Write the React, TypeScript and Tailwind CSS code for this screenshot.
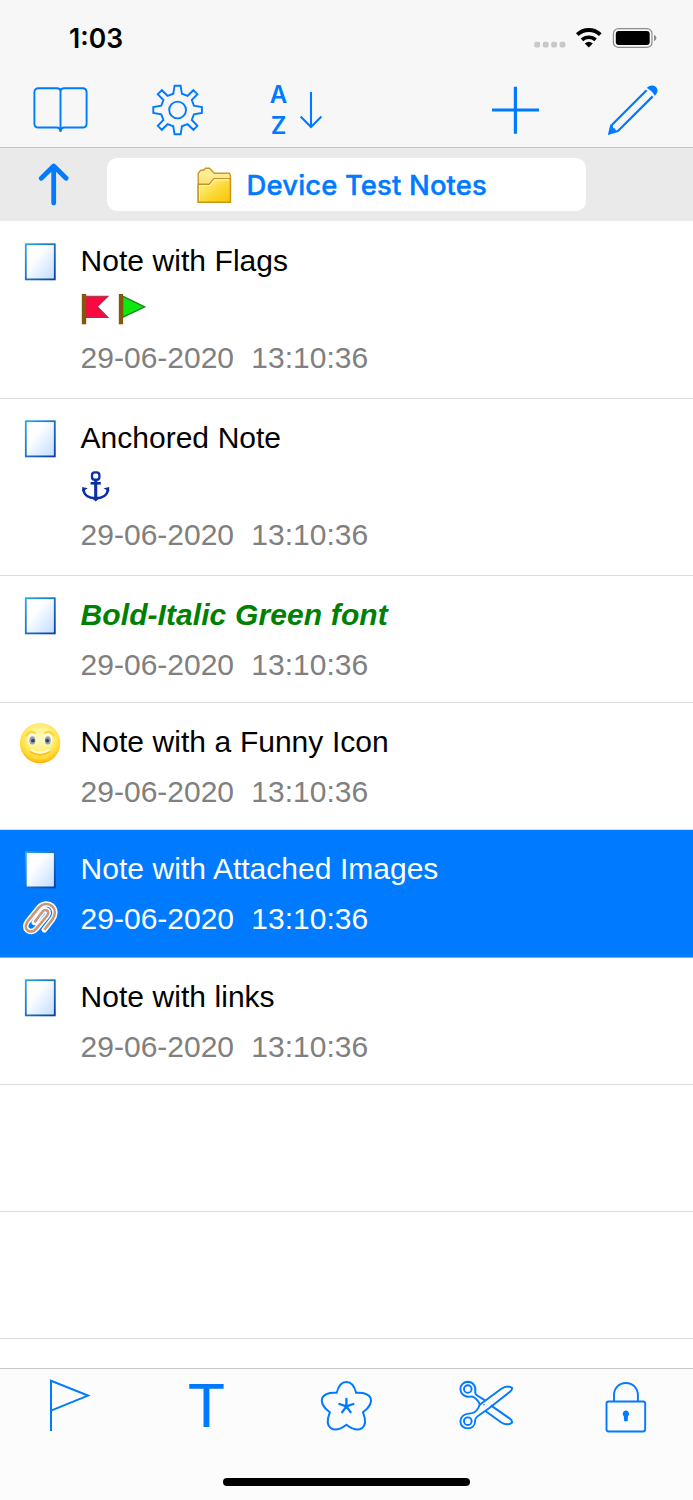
import type { ReactNode } from 'react';

type NoteIcon = 'page' | 'smiley';

interface Note {
  id: number;
  title: string;
  date: string;
  time: string;
  icon: NoteIcon;
  titleClass?: string;
  marks?: ReactNode;
  attachment?: boolean;
  selected?: boolean;
}

// one quarter of the gear outline, rotated four times
const GEAR_QUARTER = [
  [-4.3, -16.3],
  [-3, -24.3],
  [3, -24.3],
  [4.3, -16.3],
  [10, -14.2],
  [15.8, -19.8],
  [19.8, -15.8],
  [14.2, -10],
];

const GEAR_POINTS = [0, 1, 2, 3]
  .flatMap(turn =>
    GEAR_QUARTER.map(([x, y]) => {
      let p = [x, y];
      for (let i = 0; i < turn; i++) p = [-p[1], p[0]];
      return p.join(',');
    })
  )
  .join(' ');

function StatusBar() {
  return (
    <div className="h-[76px] flex pl-[69px] pr-[36px]">
      <span className="mt-[22px] font-['Inter'] font-semibold text-[26.5px] leading-[32px]">1:03</span>
      <svg className="ml-auto mt-[24px]" width="124" height="28" viewBox="0 0 124 28" fill="none">
        <g fill="#c8c8c8">
          <rect x="1.3" y="17.8" width="5.8" height="5.8" rx="1.8" />
          <rect x="9.8" y="17.8" width="5.8" height="5.8" rx="1.8" />
          <rect x="18.2" y="17.8" width="5.8" height="5.8" rx="1.8" />
          <rect x="26.6" y="17.8" width="5.8" height="5.8" rx="1.8" />
        </g>
        <path d="M44.3 10.6A16.6 16.6 0 0 1 67.3 10.6" stroke="#000" strokeWidth="3.9" />
        <path d="M49 15.9A10 10 0 0 1 62.6 15.9" stroke="#000" strokeWidth="3.6" />
        <path d="M55.8 23.6 51.8 19.5Q55.8 16 59.8 19.5Z" fill="#000" />
        <rect x="80.4" y="4.6" width="38.6" height="18.8" rx="5" stroke="#8c8c8c" strokeWidth="1.2" />
        <rect x="82.8" y="7" width="33.9" height="14" rx="3" fill="#000" />
        <path d="M121 10.8Q123.5 12 123.5 14T121 17.2Z" fill="#8c8c8c" />
      </svg>
    </div>
  );
}

function TopToolbar() {
  return (
    <div className="h-[71px] flex pt-[6px] pl-[30px] pr-[33px] text-[#007aff]">
      {/* Notebook */}
      <svg width="60" height="56" viewBox="0 0 60 56" fill="none" stroke="currentColor" strokeWidth="1.9">
        <path d="M30.5 8.8Q30 6.3 27 6.3H8.5Q4.4 6.3 4.4 10.4V41.4Q4.4 45.5 8.5 45.5H27Q29.7 45.5 30.5 49.5Q31.3 45.5 34 45.5H52.5Q56.6 45.5 56.6 41.4V10.4Q56.6 6.3 52.5 6.3H34Q31 6.3 30.5 8.8V50" />
      </svg>
      {/* Settings */}
      <svg className="ml-[60px]" width="56" height="56" viewBox="0 0 56 56" fill="none" stroke="currentColor" strokeWidth="1.9">
        <g transform="translate(27.6 28)">
          <polygon points={GEAR_POINTS} />
          <circle r="8.4" />
        </g>
      </svg>
      {/* Sort */}
      <div className="ml-[60px] w-[60px] flex">
        <div className="w-[25px] -mt-[3px] flex flex-col items-center font-['Inter'] font-semibold text-[24px] leading-[31px]">
          <span>A</span>
          <span>Z</span>
        </div>
        <svg width="35" height="56" viewBox="0 0 35 56" fill="none" stroke="currentColor" strokeWidth="2.1">
          <path d="M20 10V45M9.6 34.6 20 45 30.4 34.6" />
        </svg>
      </div>
      {/* Add */}
      <svg className="ml-auto" width="54" height="56" viewBox="0 0 54 56" stroke="currentColor" strokeWidth="3.2">
        <path d="M27.4 4.7V51.7M4 28H51" />
      </svg>
      {/* Edit */}
      <svg className="ml-[64px]" width="54" height="56" viewBox="0 0 54 56" fill="none">
        <path d="M40.6 8.2 5.8 43M46.7 14.4 11.7 49.2" stroke="currentColor" strokeWidth="2.2" />
        <path d="M1.8 53 4.4 42.2L7.2 43.4Q6.6 44.6 7.2 46Q9.6 46 9.8 48.2Q11.4 47.8 12.4 50Z" fill="currentColor" />
        <path d="M40.8 6C43.6 2.8 47.8 2.8 50 5C52.2 7.2 52 11 48.8 13.8Q46 8.4 40.8 6Z" fill="currentColor" />
      </svg>
    </div>
  );
}

function FolderBar() {
  return (
    <div className="h-[74px] border-t border-[#c3c3c3] bg-[#eaeaea] flex pl-[38px] pt-[9px] shrink-0">
      <svg className="mt-[2px]" width="32" height="50" viewBox="0 0 32 50" fill="none" stroke="#007aff" strokeWidth="4.8" strokeLinecap="round" strokeLinejoin="round">
        <path d="M15.7 44V8.2M3.3 19.2 15.7 7 28.1 19.2" />
      </svg>
      <div className="ml-[37px] mt-[0.5px] w-[479px] h-[53.5px] rounded-[10px] bg-white flex items-center pl-[89px] pt-[2px]">
        <svg width="36" height="38" viewBox="0 0 36 38">
          <defs>
            <linearGradient id="folderBack" x1="0" y1="0" x2="0" y2="1">
              <stop offset="0" stopColor="#fff3a8" />
              <stop offset="1" stopColor="#f3cd49" />
            </linearGradient>
            <linearGradient id="folderFront" x1="0" y1="0" x2="1" y2="1">
              <stop offset="0" stopColor="#fff6a0" />
              <stop offset="0.55" stopColor="#fbd935" />
              <stop offset="1" stopColor="#fcc400" />
            </linearGradient>
          </defs>
          <path d="M2.2 36V7.2L4.8 4.2H7.6L9.4 2.2H13.6L18.2 7.2H33.2L34.4 9V36Z" fill="url(#folderBack)" stroke="#c99a22" strokeWidth="1.4" />
          <path d="M2.2 36.2V18.2H13.2L18 12.6H34.4V36.2Z" fill="url(#folderFront)" stroke="#c9941a" strokeWidth="1.4" />
          <path d="M3.5 34.5V19.5H13.8L18.6 13.9H33" fill="none" stroke="#fff7bf" strokeWidth="1.1" />
        </svg>
        <span className="ml-[14.5px] font-['Inter'] font-medium text-[27.5px] tracking-[0.12px] text-[#007aff] whitespace-nowrap [-webkit-text-stroke:0.4px_#007aff]">Device Test Notes</span>
      </div>
    </div>
  );
}

function PageIcon() {
  return (
    <svg width="44" height="44" viewBox="0 0 44 44">
      <defs>
        <linearGradient id="pageFill" x1="0" y1="0" x2="1" y2="1">
          <stop offset="0.35" stopColor="#ffffff" />
          <stop offset="1" stopColor="#c0dcff" />
        </linearGradient>
        <linearGradient id="pageEdge" x1="0" y1="0" x2="1" y2="1">
          <stop offset="0" stopColor="#2ba9e6" />
          <stop offset="1" stopColor="#0a3ca6" />
        </linearGradient>
      </defs>
      <rect x="7.8" y="4.2" width="29" height="35.2" fill="url(#pageFill)" stroke="url(#pageEdge)" strokeWidth="1.8" />
    </svg>
  );
}

function SmileyIcon() {
  return (
    <svg width="44" height="44" viewBox="0 0 44 44">
      <defs>
        <radialGradient id="face" cx="0.5" cy="0.38" r="0.62">
          <stop offset="0" stopColor="#fffbc8" />
          <stop offset="0.5" stopColor="#fff080" />
          <stop offset="0.8" stopColor="#ffdb34" />
          <stop offset="1" stopColor="#fdae08" />
        </radialGradient>
      </defs>
      <circle cx="22.1" cy="22.1" r="20.2" fill="url(#face)" />
      <ellipse cx="14" cy="18.4" rx="4.4" ry="6" fill="#fffdea" />
      <ellipse cx="30" cy="18.4" rx="4.4" ry="6" fill="#fffdea" />
      <path d="M8.4 14.4Q11 9.4 17 11.6M27.2 11.6Q33.2 9.4 35.8 14.4" fill="none" stroke="#fdcf3c" strokeWidth="1.8" strokeLinecap="round" />
      <ellipse cx="14.4" cy="19.4" rx="3" ry="4.2" fill="#98a2ac" />
      <ellipse cx="29.8" cy="19.4" rx="3" ry="4.2" fill="#98a2ac" />
      <circle cx="14.9" cy="19.6" r="1.9" fill="#3c4754" />
      <circle cx="29.3" cy="19.6" r="1.9" fill="#3c4754" />
      <path d="M12.6 31Q22 36.6 31.6 31" fill="none" stroke="#fbc226" strokeWidth="2" strokeLinecap="round" />
      <path d="M13.5 29.2Q22 34 30.7 29.2" fill="none" stroke="#fffbd0" strokeWidth="2" strokeLinecap="round" />
    </svg>
  );
}

const CLIP_PATH =
  'M26.4 33.8 34.4 23.6C37.8 18.8 37.6 13.6 34.2 10.2C30.6 7 25 7.2 21 11.4L9.8 25.2C7.2 28.8 7.2 32.4 9.4 34.2C12 36.4 15.6 35.8 18.4 32.6L28.8 20C30.6 17.6 30.6 15.6 29.2 14.6C27.6 13.6 25.6 14.2 24.2 16L16.4 26.4';

function PaperclipIcon() {
  return (
    <svg className="mt-[4px]" width="44" height="44" viewBox="0 0 44 44" fill="none" strokeLinejoin="round">
      <path d={CLIP_PATH} stroke="#ffffff" strokeWidth="5.6" strokeLinecap="round" />
      <path d={CLIP_PATH} stroke="#c9957b" strokeWidth="2.6" />
    </svg>
  );
}

function FlagMarks() {
  return (
    <svg className="-ml-[0.6px]" width="66" height="34" viewBox="0 0 66 34">
      <path d="M5.5 4.2H28L17.4 14.7 28 25.4H5.5Z" fill="#fb0840" stroke="#a8304c" strokeWidth="1.1" />
      <rect x="1.8" y="2" width="4.4" height="30.3" fill="#80590c" />
      <path d="M42.5 4.2 64.8 14.9 42.5 25.4Z" fill="#0ee80e" stroke="#12881c" strokeWidth="1.4" />
      <rect x="38.8" y="2" width="4.3" height="30.3" fill="#80590c" />
    </svg>
  );
}

function AnchorMark() {
  return (
    <svg className="-ml-[0.8px]" width="32" height="34" viewBox="0 0 32 34" fill="none" stroke="#0a2fa8">
      <rect x="12" y="3.3" width="7.4" height="7.4" rx="2.8" strokeWidth="2.3" />
      <path d="M15.7 10.9V30" strokeWidth="3.1" />
      <path d="M10.6 14.3H20.8" strokeWidth="2.6" />
      <path d="M3.4 20.4C4 26.8 9.6 29.3 15.7 29.3S27.4 26.8 28 20.4" strokeWidth="2.5" />
      <path d="M2.2 22.6V18L7.8 19.2L5 21ZM29.2 22.6V18L23.6 19.2L26.4 21ZM12.9 29.9H18.5L15.7 32.6Z" fill="#0a2fa8" stroke="none" />
    </svg>
  );
}

const NOTES: Note[] = [
  { id: 1, title: 'Note with Flags', date: '29-06-2020', time: '13:10:36', icon: 'page', marks: <FlagMarks /> },
  { id: 2, title: 'Anchored Note', date: '29-06-2020', time: '13:10:36', icon: 'page', marks: <AnchorMark /> },
  { id: 3, title: 'Bold-Italic Green font', date: '29-06-2020', time: '13:10:36', icon: 'page', titleClass: 'font-bold italic tracking-[0.07px] text-[#008000]' },
  { id: 4, title: 'Note with a Funny Icon', date: '29-06-2020', time: '13:10:36', icon: 'smiley' },
  { id: 5, title: 'Note with Attached Images', date: '29-06-2020', time: '13:10:36', icon: 'page', attachment: true, selected: true },
  { id: 6, title: 'Note with links', date: '29-06-2020', time: '13:10:36', icon: 'page' },
];

function NoteRow({ note }: { note: Note }) {
  const height = note.marks ? 'h-[177.2px]' : 'h-[127.2px]';
  const colors = note.selected ? 'bg-[#007aff] text-white border-[#6fb3ff]' : 'bg-white text-black border-[#dcdcdc]';

  return (
    <li className={`${height} ${colors} border-b flex shrink-0`}>
      <div className="w-[80.6px] shrink-0 flex flex-col items-center pt-[18px]">
        {note.icon === 'smiley' ? <SmileyIcon /> : <PageIcon />}
        {note.attachment && <PaperclipIcon />}
      </div>
      <div className="pt-[14px] whitespace-pre text-[30px] leading-[50px] [word-spacing:0.3px]">
        <div className={note.titleClass}>{note.title}</div>
        {note.marks && <div className="h-[47px] pt-[6px]">{note.marks}</div>}
        <div className={note.selected ? 'text-white' : 'text-[#808080]'}>{`${note.date}  ${note.time}`}</div>
      </div>
    </li>
  );
}

function BottomToolbar() {
  return (
    <footer className="h-[132px] shrink-0 border-t border-[#c9c9c9] bg-[#fcfcfc] flex flex-col items-center">
      <div className="w-full h-[67px] flex justify-between pt-[7px] pl-[36px] pr-[37px] text-[#007aff]">
        {/* Flag */}
        <svg width="60" height="60" viewBox="0 0 60 60" fill="none" stroke="currentColor" strokeWidth="2">
          <path d="M15 55V4.8L52 19.6 15 34.6" />
        </svg>
        {/* Text */}
        <div className="w-[60px] -mt-[6px] pl-px text-center font-['Inter'] text-[59px] leading-[72px] scale-x-106">T</div>
        {/* Icons */}
        <svg width="60" height="60" viewBox="0 0 60 60" fill="none" stroke="currentColor" strokeWidth="2">
          <path d="M20.7 16.7C22.4 10 26 6 30.4 6S38.4 10 40.1 16.7C47 16.3 52.6 17.6 54.6 22C56.4 26.6 53.2 31.6 47 36.3C49.6 43 49.8 49.4 46 52.2C42 54.8 36.2 53.2 30.4 48.7C24.6 53.2 18.8 54.8 14.8 52.2C11 49.4 11.2 43 13.8 36.3C7.6 31.6 4.4 26.6 6.2 22C8.2 17.6 13.8 16.3 20.7 16.7Z" />
          <path d="M30.4 30.4V22.8M30.4 30.4 37.4 28M30.4 30.4 34.6 36.2M30.4 30.4 26.2 36.2M30.4 30.4 23.4 28" strokeWidth="2.3" strokeLinecap="round" />
        </svg>
        {/* Cut */}
        <svg width="60" height="60" viewBox="0 0 60 60" fill="none" stroke="currentColor" strokeWidth="1.9">
          <circle cx="11.8" cy="13" r="3.8" />
          <circle cx="11.8" cy="45.2" r="3.8" />
          <path d="M23.8 28.4C22.4 24.8 20 22.2 16 20.4C10 22 4.6 18.6 4.4 13C4.4 8.4 8 5.8 12 5.8C17 6 20.4 10.4 19.2 15.8C19 17.6 20 18.8 21.6 19.8L29 24.4" />
          <path d="M33 32.2 23.4 39C19.6 41.2 19 42.4 19.2 45C19 49.8 15.8 52.4 11.8 52.4C7.6 52.4 4.4 49.6 4.4 45.6C4.4 41 8 37.6 13 37.6C18.4 37.6 20.4 35.6 22.4 31.6Q23.2 29.4 24.4 28.2L45 13C49 10.2 53 9.8 56.2 12C56.2 13.6 55.4 14.8 54.2 15.6L33 32.2" />
          <path d="M29 34.8 45 46.2C49 48.8 53.2 48.8 56.2 46.4C56.2 44.4 55 43.6 53.8 42.6L34.8 29.4" />
          <circle cx="28" cy="28.8" r="0.8" fill="currentColor" stroke="none" />
        </svg>
        {/* Lock */}
        <svg width="60" height="60" viewBox="0 0 60 60" fill="none" stroke="currentColor" strokeWidth="1.9">
          <rect x="10.5" y="25.5" width="38.7" height="30" rx="2.2" />
          <path d="M18 25.2V19.2C18 11.8 23.2 7 29.9 7S41.9 11.8 41.9 19.2V25.2" />
          <path d="M29.9 34.6A3.2 3.2 0 0 1 32 40.2L31.6 45.2H28.2L27.8 40.2A3.2 3.2 0 0 1 29.9 34.6Z" fill="currentColor" stroke="none" />
        </svg>
      </div>
      <div className="mt-[41.7px] w-[247.5px] h-[8.6px] rounded-full bg-black" />
    </footer>
  );
}

function App() {
  return (
    <div className="w-[693px] h-[1500px] flex flex-col overflow-hidden bg-white font-['Liberation_Sans',Arial,sans-serif] text-black">
      <header className="bg-[#f7f7f7] shrink-0">
        <StatusBar />
        <TopToolbar />
      </header>
      <FolderBar />

      <ul className="flex-1 min-h-0 pt-[0.6px] flex flex-col overflow-hidden">
        {NOTES.map(note => (
          <NoteRow key={note.id} note={note} />
        ))}
        {/* Empty rows */}
        <li className="h-[127.2px] shrink-0 border-b border-[#dcdcdc]" />
        <li className="h-[127.2px] shrink-0 border-b border-[#dcdcdc]" />
      </ul>

      <BottomToolbar />
    </div>
  );
}

export default App;
